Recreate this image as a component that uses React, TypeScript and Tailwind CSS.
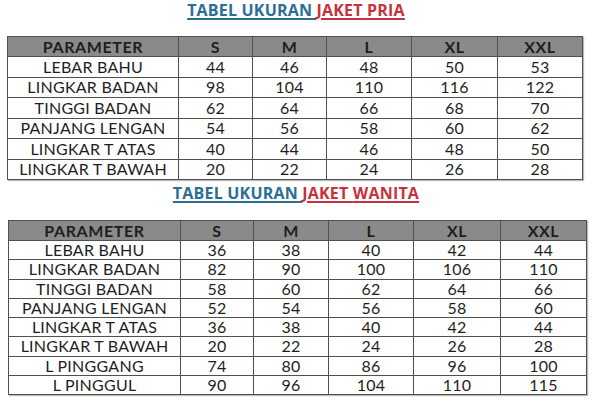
const sizes = ["S", "M", "L", "XL", "XXL"];

const pria = [
  ["LEBAR BAHU", 44, 46, 48, 50, 53],
  ["LINGKAR BADAN", 98, 104, 110, 116, 122],
  ["TINGGI BADAN", 62, 64, 66, 68, 70],
  ["PANJANG LENGAN", 54, 56, 58, 60, 62],
  ["LINGKAR T ATAS", 40, 44, 46, 48, 50],
  ["LINGKAR T BAWAH", 20, 22, 24, 26, 28],
];

const wanita = [
  ["LEBAR BAHU", 36, 38, 40, 42, 44],
  ["LINGKAR BADAN", 82, 90, 100, 106, 110],
  ["TINGGI BADAN", 58, 60, 62, 64, 66],
  ["PANJANG LENGAN", 52, 54, 56, 58, 60],
  ["LINGKAR T ATAS", 36, 38, 40, 42, 44],
  ["LINGKAR T BAWAH", 20, 22, 24, 26, 28],
  ["L PINGGANG", 74, 80, 86, 96, 100],
  ["L PINGGUL", 90, 96, 104, 110, 115],
];

const Title = ({ label }: { label: string }) => (
  <h2 className="text-center text-[16px] font-bold leading-[18px] tracking-[0.2px] font-['Open_Sans',sans-serif]">
    <span className="text-[#2a6e94] underline decoration-[1.5px] underline-offset-[2px]">TABEL UKURAN </span>
    <span className="text-[#c8313a] underline decoration-[1.5px] underline-offset-[2px]">JAKET {label}</span>
  </h2>
);

const SizeTable = ({
  rows,
  widths,
  rowH,
  className,
}: {
  rows: (string | number)[][];
  widths: number[];
  rowH: string;
  className: string;
}) => (
  <table
    className={`border-collapse table-fixed text-[16px] tracking-[0.25px] text-[#1e1e1e] shadow-[1px_1px_1px_#bbb] font-['Lato',sans-serif] ${className}`}
  >
    <colgroup>
      {widths.map((w, i) => (
        <col key={i} style={{ width: w }} />
      ))}
    </colgroup>
    <thead>
      <tr className="bg-[#8a8a8a] h-[20px]">
        <th className="border border-[#505050] font-bold p-0 leading-none tracking-[0.6px]">PARAMETER</th>
        {sizes.map((s) => (
          <th key={s} className="border border-[#505050] font-bold p-0 leading-none tracking-[0.6px]">
            {s}
          </th>
        ))}
      </tr>
    </thead>
    <tbody>
      {rows.map((r, i) => (
        <tr key={i} className={rowH}>
          {r.map((c, j) => (
            <td key={j} className="border border-[#505050] text-center p-0 leading-none">
              {c}
            </td>
          ))}
        </tr>
      ))}
    </tbody>
  </table>
);

export default function App() {
  return (
    <div className="w-[592px] h-[402px] bg-white overflow-hidden">
      <div className="mt-[1px]">
        <Title label="PRIA" />
      </div>
      <SizeTable
        rows={pria}
        widths={[171, 74, 74, 85, 86, 85]}
        rowH="h-[20.5px]"
        className="mt-[17px] ml-[7px] w-[575px]"
      />
      <div className="mt-[4px]">
        <Title label="WANITA" />
      </div>
      <SizeTable
        rows={wanita}
        widths={[172, 73, 75, 85, 87, 86]}
        rowH="h-[19.25px]"
        className="mt-[18px] ml-[8px] w-[578px]"
      />
    </div>
  );
}
